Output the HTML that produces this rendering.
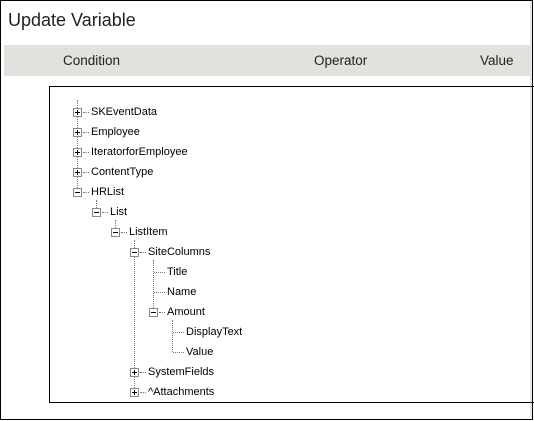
<!DOCTYPE html>
<html><head><style>
body{margin:0;width:534px;height:421px;background:#fff;position:relative;overflow:hidden;font-family:"Liberation Sans",sans-serif}
.a{position:absolute}
.frame{left:0;top:0;width:531px;height:418px;border:1px solid #000}
.title{left:8px;top:10px;font-size:18px;color:#222}
.hdr{left:4px;top:45px;width:526px;height:31px;background:#e1e1dd}
.h{top:53px;font-size:13.5px;color:#222}
.box{left:49px;top:86px;width:484px;height:315px;border:1px solid #000;border-right:none}
.t{font-size:11px;color:#000;line-height:12px}
.pm{width:7px;height:7px;border:1px solid #888;background:#fff}
.pm::before{content:"";position:absolute;left:1px;top:3px;width:5px;height:1px;background:#000}
.p::after{content:"";position:absolute;left:3px;top:1px;width:1px;height:5px;background:#000}
.v{border-left:1px dotted #777;width:0}
.hz{border-top:1px dotted #777;height:0}
.sh{left:530px;top:1px;width:2px;height:417px;background:#e6e6e6}
</style></head><body>
<div class="a frame"></div>
<div class="a sh"></div>
<div class="a title">Update Variable</div>
<div class="a hdr"></div>
<div class="a h" style="left:63px">Condition</div>
<div class="a h" style="left:314px">Operator</div>
<div class="a h" style="left:480px">Value</div>
<div class="a box"></div>

<div class="a v" style="left:77px;top:100px;height:92px"></div>
<div class="a v" style="left:96px;top:200px;height:12px"></div>
<div class="a v" style="left:115px;top:220px;height:12px"></div>
<div class="a v" style="left:134px;top:240px;height:152px"></div>
<div class="a v" style="left:153px;top:260px;height:52px"></div>
<div class="a v" style="left:172px;top:320px;height:32px"></div>

<div class="a pm p" style="left:73px;top:108px"></div><div class="a hz" style="left:83px;top:112px;width:6px"></div><div class="a t" style="left:91px;top:106px">SKEventData</div>
<div class="a pm p" style="left:73px;top:128px"></div><div class="a hz" style="left:83px;top:132px;width:6px"></div><div class="a t" style="left:91px;top:126px">Employee</div>
<div class="a pm p" style="left:73px;top:148px"></div><div class="a hz" style="left:83px;top:152px;width:6px"></div><div class="a t" style="left:91px;top:146px">IteratorforEmployee</div>
<div class="a pm p" style="left:73px;top:168px"></div><div class="a hz" style="left:83px;top:172px;width:6px"></div><div class="a t" style="left:91px;top:166px">ContentType</div>
<div class="a pm" style="left:73px;top:188px"></div><div class="a hz" style="left:83px;top:192px;width:6px"></div><div class="a t" style="left:91px;top:186px">HRList</div>
<div class="a pm" style="left:92px;top:208px"></div><div class="a hz" style="left:102px;top:212px;width:6px"></div><div class="a t" style="left:110px;top:206px">List</div>
<div class="a pm" style="left:111px;top:228px"></div><div class="a hz" style="left:121px;top:232px;width:6px"></div><div class="a t" style="left:129px;top:226px">ListItem</div>
<div class="a pm" style="left:130px;top:248px"></div><div class="a hz" style="left:140px;top:252px;width:6px"></div><div class="a t" style="left:148px;top:246px">SiteColumns</div>
<div class="a hz" style="left:154px;top:272px;width:11px"></div><div class="a t" style="left:167px;top:266px">Title</div>
<div class="a hz" style="left:154px;top:292px;width:11px"></div><div class="a t" style="left:167px;top:286px">Name</div>
<div class="a pm" style="left:149px;top:308px"></div><div class="a hz" style="left:159px;top:312px;width:6px"></div><div class="a t" style="left:167px;top:306px">Amount</div>
<div class="a hz" style="left:173px;top:332px;width:11px"></div><div class="a t" style="left:186px;top:326px">DisplayText</div>
<div class="a hz" style="left:173px;top:352px;width:11px"></div><div class="a t" style="left:186px;top:346px">Value</div>
<div class="a pm p" style="left:130px;top:368px"></div><div class="a hz" style="left:140px;top:372px;width:6px"></div><div class="a t" style="left:148px;top:366px">SystemFields</div>
<div class="a pm p" style="left:130px;top:388px"></div><div class="a hz" style="left:140px;top:392px;width:6px"></div><div class="a t" style="left:148px;top:386px">^Attachments</div>
</body></html>
